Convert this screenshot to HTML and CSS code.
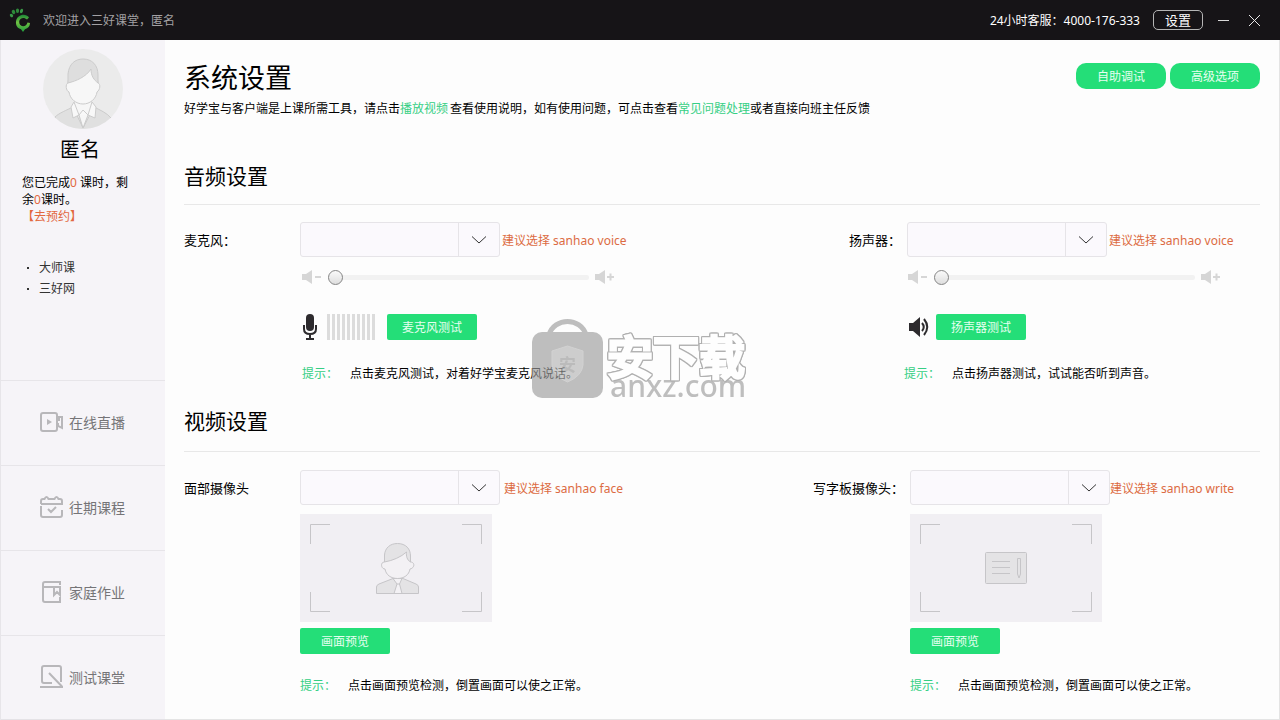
FILE: index.html
```html
<!DOCTYPE html>
<html lang="zh-CN">
<head>
<meta charset="utf-8">
<meta name="viewport" content="width=device-width, initial-scale=1">
<title>三好课堂</title>
<link rel="stylesheet" href="styles.css">
</head>
<body>
<div class="app">
  <header class="topbar">
    <svg class="logo" width="24" height="26" viewBox="0 0 24 26" aria-hidden="true">
      <defs><linearGradient id="leaf" x1="0" y1="0" x2="0" y2="1"><stop offset="0" stop-color="#1f8a38"/><stop offset=".45" stop-color="#6fc043"/><stop offset="1" stop-color="#1f9a3c"/></linearGradient></defs>
      <path d="M20 10.500C17 6 8 7 7 14.500C6.500 19 9 21.500 12 22.200L14 25L16 22.200C19 21.500 21 19 21 16L18.500 15.500C18 18 16 19.300 14 19.200C11.500 19 10 17 10.200 14.500C10.600 11 15 9.500 18 12.500Z" fill="url(#leaf)"/>
      <ellipse cx="2.500" cy="8.500" rx="1.500" ry="1.900" fill="#3a9a48" transform="rotate(-40 2.500 8.500)"/>
      <ellipse cx="4.500" cy="5" rx="1.700" ry="2.200" fill="#2d8a3a" transform="rotate(-25 4.500 5)"/>
      <ellipse cx="8.500" cy="3.800" rx="1.600" ry="2.300" fill="#2f8a3c"/>
      <ellipse cx="12.500" cy="4" rx="1.500" ry="2.300" fill="#3a9a48" transform="rotate(20 12.500 4)"/>
    </svg>
    <span class="welcome">欢迎进入三好课堂，匿名</span>
    <span class="hotline">24小时客服：4000-176-333</span>
    <button class="settings" type="button">设置</button>
    <button class="window-button" type="button" aria-label="最小化"><svg width="11" height="11" viewBox="0 0 11 11"><path d="M0 5.500H11" stroke="#d8d8d8"/></svg></button>
    <button class="window-button" type="button" aria-label="关闭"><svg width="11" height="11" viewBox="0 0 11 11"><path d="M0 0L11 11M11 0L0 11" stroke="#e8e8e8"/></svg></button>
  </header>

  <aside class="sidebar">
    <section class="profile">
      <svg class="avatar" width="80" height="80" viewBox="0 0 80 80" aria-hidden="true">
        <defs><clipPath id="round"><circle cx="40" cy="40" r="40"/></clipPath></defs>
        <circle cx="40" cy="40" r="40" fill="#ebebeb"/>
        <g clip-path="url(#round)" stroke="#cbcbcb" stroke-width="1">
          <path d="M12 68C16 64 24 61 30 58L40 79L51 58C57 61 64 64 68 69V81H12Z" fill="#e0e0e0"/>
          <path d="M31 53L28 58L30 69L36 66L40 79L45 66L52 69L53 58L49 53Z" fill="#f8f8f8"/>
          <path d="M31 53L36 66L40 61L45 66L49 53M36 66L40 79L45 66" fill="#f6f6f6"/>
          <path d="M25 34C22 35 23 42 26 43C27 50 33 55 40 55C47 55 53 50 54 43C57 41 58 35 55 34L53 20H27Z" fill="#f7f7f7"/>
          <path d="M25 34V25C26 15 32 10 40 10C49 10 55 16 55 26V34C51 31 48 27 48 20C43 28 33 32 25 34Z" fill="#dedede"/>
        </g>
      </svg>
      <h2 class="user-name">匿名</h2>
      <p class="lesson-info">您已完成<em>0</em> 课时，剩余<em>0</em>课时。<br><a href="#">【去预约】</a></p>
      <ul class="site-links">
        <li><a href="#">大师课</a></li>
        <li><a href="#">三好网</a></li>
      </ul>
    </section>
    <nav class="menu">
      <a href="#"><svg width="24" height="24" viewBox="0 0 24 24"><rect x="1" y="3" width="16" height="18" rx="2"/><path d="M17 10H19V7H22V18L18 16V13"/><path d="M7 9V15L12 12Z" class="solid"/></svg><span>在线直播</span></a>
      <a href="#"><svg width="24" height="24" viewBox="0 0 24 24"><path d="M1 11V20Q1 22 3 22H20Q22 22 22 20V15M1 9H22V6Q22 4 20 4H18.500Q16.500 0 14.500 4H8.500Q6.500 0 4.500 4H3Q1 4 1 6V9M8 14L11 17L16 12"/></svg><span>往期课程</span></a>
      <a href="#"><svg width="24" height="24" viewBox="0 0 24 24"><path d="M20 2H5Q3 2 3 4V20Q3 22 5 22H20V17M3 7H20V15L17 12L14 15V7M20 1V5"/></svg><span>家庭作业</span></a>
      <a href="#"><svg width="24" height="24" viewBox="0 0 24 24"><path d="M12 18H4Q2 18 2 16V3Q2 1 4 1H19Q21 1 21 3V17M9 8L22 21.500M0 22H23"/></svg><span>测试课堂</span></a>
    </nav>
  </aside>

  <main class="content">
    <div class="page-head">
      <div>
        <h1>系统设置</h1>
        <p class="intro">好学宝与客户端是上课所需工具，请点击<a class="spaced" href="#">播放视频</a>查看使用说明，如有使用问题，可点击查看<a href="#">常见问题处理</a>或者直接向班主任反馈</p>
      </div>
      <div class="actions">
        <button class="pill" type="button">自助调试</button>
        <button class="pill" type="button">高级选项</button>
      </div>
    </div>

    <section class="audio">
      <h2>音频设置</h2>
      <div class="devices">
        <label for="mic">麦克风：</label>
        <div class="device">
          <div class="choice">
            <span class="select-box"><select id="mic"><option></option></select><svg width="14" height="8" viewBox="0 0 14 8"><path d="M0 .5L7 7L14 .5"/></svg></span>
            <span class="advice">建议选择 sanhao voice</span>
          </div>
          <div class="volume">
            <svg width="20" height="16" viewBox="0 0 20 16"><path class="horn" d="M0 5H4L10 1V15L4 11H0Z"/><path d="M13 8H19"/></svg>
            <input type="range" min="0" max="100" value="0" aria-label="麦克风音量">
            <svg width="20" height="16" viewBox="0 0 20 16"><path class="horn" d="M0 5H4L10 1V15L4 11H0Z"/><path d="M12 8H19M15.500 4.500V11.500"/></svg>
          </div>
          <div class="test">
            <svg width="14" height="26" viewBox="0 0 14 26"><rect x="3" y="0" width="8" height="17" rx="4" fill="#2d2b2e"/><path d="M1 11V15Q1 20 7 20Q13 20 13 15V11M7 20V25M3 25H11" fill="none" stroke="#2d2b2e" stroke-width="2"/></svg>
            <div class="meter"></div>
            <button class="green" type="button">麦克风测试</button>
          </div>
          <p class="tip"><b>提示：</b>点击麦克风测试，对着好学宝麦克风说话。</p>
        </div>
        <label for="speaker">扬声器：</label>
        <div class="device side">
          <div class="choice">
            <span class="select-box"><select id="speaker"><option></option></select><svg width="14" height="8" viewBox="0 0 14 8"><path d="M0 .5L7 7L14 .5"/></svg></span>
            <span class="advice">建议选择 sanhao voice</span>
          </div>
          <div class="volume">
            <svg width="20" height="16" viewBox="0 0 20 16"><path class="horn" d="M0 5H4L10 1V15L4 11H0Z"/><path d="M13 8H19"/></svg>
            <input type="range" min="0" max="100" value="0" aria-label="扬声器音量">
            <svg width="20" height="16" viewBox="0 0 20 16"><path class="horn" d="M0 5H4L10 1V15L4 11H0Z"/><path d="M12 8H19M15.500 4.500V11.500"/></svg>
          </div>
          <div class="test">
            <svg width="20" height="20" viewBox="0 0 20 20"><path d="M0 6H4L11 0V20L4 14H0Z" fill="#2d2b2e"/><path d="M13 6Q16.500 10 13 14M15 2Q21.500 10 15 18" fill="none" stroke="#2d2b2e" stroke-width="2"/></svg>
            <button class="green" type="button">扬声器测试</button>
          </div>
          <p class="tip"><b>提示：</b>点击扬声器测试，试试能否听到声音。</p>
        </div>
      </div>
    </section>

    <section class="video">
      <h2>视频设置</h2>
      <div class="devices">
        <label for="face">面部摄像头</label>
        <div class="device">
          <div class="choice">
            <span class="select-box"><select id="face"><option></option></select><svg width="14" height="8" viewBox="0 0 14 8"><path d="M0 .5L7 7L14 .5"/></svg></span>
            <span class="advice">建议选择 sanhao face</span>
          </div>
          <svg class="preview" width="192" height="108" viewBox="0 0 192 108" aria-hidden="true">
            <path d="M10.500 30V10.500H30M162 10.500H181.500V30M10.500 78V97.500H30M162 97.500H181.500V78"/>
            <path d="M76.500 79.500V73Q76.500 71 79 70L93 64.500H103L116 70Q118.500 71 118.500 73V79.500Z" fill="#e4e3e5"/>
            <path d="M93 64.500H102L99.500 70L102 79.500H94L97 70Z" fill="#f3f1f4"/><path d="M97 70H100"/>
            <path d="M84.500 48C80 48 81 55 85 55C86 61 91 64.500 97.500 64.500C104 64.500 109 61 110 55C115 54 115 48 110.500 48L106 35H90Z" fill="#f3f1f4"/>
            <path d="M84.500 48V41C85 34 90 29.500 97.500 29.500C106 29.500 110.500 35 110.500 42V48C107 46 106 42 106.500 38C101 43 93 46.500 84.500 48Z" fill="#e4e3e5"/>
          </svg>
          <button class="green" type="button">画面预览</button>
          <p class="tip"><b>提示：</b>点击画面预览检测，倒置画面可以使之正常。</p>
        </div>
        <label for="board">写字板摄像头：</label>
        <div class="device side">
          <div class="choice">
            <span class="select-box"><select id="board"><option></option></select><svg width="14" height="8" viewBox="0 0 14 8"><path d="M0 .5L7 7L14 .5"/></svg></span>
            <span class="advice">建议选择 sanhao write</span>
          </div>
          <svg class="preview" width="192" height="108" viewBox="0 0 192 108" aria-hidden="true">
            <path d="M10.500 30V10.500H30M162 10.500H181.500V30M10.500 78V97.500H30M162 97.500H181.500V78"/>
            <rect x="75.500" y="38.500" width="41" height="31" rx="1" fill="#e4e3e5"/>
            <path d="M82 47.500H100M82 53.500H100M82 59.500H100M107.500 44.500H110.500V60L109 64L107.500 60Z"/>
          </svg>
          <button class="green" type="button">画面预览</button>
          <p class="tip"><b>提示：</b>点击画面预览检测，倒置画面可以使之正常。</p>
        </div>
      </div>
    </section>

    <div class="watermark">
      <svg width="71" height="80" viewBox="0 0 71 80">
        <path d="M17 17C22-1 49-1 54 17" fill="none" stroke="#9d9d9d" stroke-width="5"/>
        <rect y="14" width="71" height="66" rx="10" fill="#9d9d9d"/>
        <path d="M35.500 28L51 33V47Q50 58 35.500 64Q21 58 20 47V33Z" fill="#b4b4b4" stroke="#bcbcbc"/>
        <text x="35.500" y="53" text-anchor="middle">安</text>
      </svg>
      <div class="watermark-text"><span class="watermark-name">安下载</span><span class="watermark-site">anxz.com</span></div>
    </div>
  </main>
</div>
</body>
</html>
```
FILE: styles.css
```css
* { box-sizing: border-box; }
body, h1, h2, p, ul { margin: 0; padding: 0; }
body, button, select {
  font-family: "Noto Sans", "Noto Sans CJK SC", sans-serif;
  font-size: 12px;
}
body { color: #000; background: #fdfdfd; }
h1, h2 { font-weight: 400; }
a { text-decoration: none; }
button { border: 0; padding: 0; cursor: pointer; }
svg { display: block; flex: none; }

.app {
  display: grid;
  grid-template-columns: 165px minmax(0, 1fr);
  grid-template-rows: 40px 1fr;
  min-height: 100vh;
}

.topbar {
  grid-column: 1 / -1;
  display: flex;
  align-items: center;
  padding: 0 20px 0 9px;
  background: #161417;
  color: #fff;
}
.welcome { margin-left: 10px; margin-right: auto; color: #a3a1a4; }
.settings {
  width: 50px;
  height: 20px;
  margin-left: 13px;
  border: 1px solid #b5b5b5;
  border-radius: 5px;
  background: transparent;
  color: #fff;
  font-size: 13px;
  line-height: 18px;
}
.window-button { margin-left: 15px; background: transparent; }
.window-button + .window-button { margin-left: 20px; }

.sidebar {
  display: flex;
  flex-direction: column;
  border-left: 1px solid #e7e5e9;
  background: #f6f4f8;
  box-shadow: inset 0 -1px #e4e2e6;
}
.profile { flex: 1; padding-top: 9px; }
.avatar { margin: 0 auto; }
.user-name {
  margin-top: 5px;
  padding-right: 6px;
  font-size: 20px;
  line-height: 32px;
  text-align: center;
}
.lesson-info {
  width: 132px;
  margin-top: 8px;
  padding-left: 21px;
  line-height: 17px;
}
.lesson-info em, .lesson-info a { color: #e2683f; font-style: normal; }
.site-links {
  margin-top: 32px;
  padding-left: 26px;
  list-style: none;
  line-height: 21px;
}
.site-links li { display: flex; align-items: center; gap: 10px; }
.site-links li::before { content: ""; width: 2px; height: 2px; background: #333; }
.site-links a { color: #333; }
.menu a {
  display: flex;
  align-items: center;
  gap: 5px;
  height: 85px;
  padding-left: 39px;
  border-top: 1px solid #e7e5e9;
  color: #757477;
  font-size: 14px;
}
.menu span { padding-bottom: 3px; }
.menu svg { margin-bottom: 2px; fill: none; stroke: #b8b7ba; stroke-width: 2; }
.menu .solid { fill: #b8b7ba; stroke: none; }

.content {
  position: relative;
  padding: 20px 19px;
  border-right: 1px solid #e4e4e4;
  border-bottom: 1px solid #e4e4e4;
}
.page-head { display: flex; justify-content: space-between; }
h1 { font-size: 27px; line-height: 36px; }
.intro { margin-top: 3px; line-height: 20px; }
.intro a { color: #35cf84; }
.intro .spaced { margin-right: 2px; }
.actions { display: flex; flex: none; gap: 4px; padding-top: 3px; }
.pill, .green {
  width: 90px;
  height: 26px;
  padding-top: 1px;
  background: #24de78;
  color: #e6fff0;
  line-height: 25px;
}
.pill { border-radius: 10px; }
.green { display: block; border-radius: 2px; }

.content h2 { border-bottom: 1px solid #e8e8e8; font-size: 21px; line-height: 32px; }
.audio h2 { margin-top: 41px; padding-bottom: 12px; }
.video h2 { margin-top: 21px; padding-bottom: 14px; }
.devices {
  display: grid;
  grid-template-columns: 116px minmax(0, 1fr) auto 353px;
  padding-top: 17px;
}
.video .devices { grid-template-columns: 116px minmax(0, 1fr) auto 350px; padding-top: 18px; }
.devices label { padding-right: 6px; font-size: 13px; line-height: 37px; }
.choice { display: flex; align-items: center; gap: 2px; }
.video .choice { gap: 4px; }
.video .side .choice { gap: 0; }
.select-box { position: relative; width: 200px; height: 35px; }
.select-box select {
  appearance: none;
  width: 100%;
  height: 100%;
  border: 1px solid #e6e4e8;
  border-radius: 3px;
  background: linear-gradient(#e6e4e8, #e6e4e8) 157px 0 / 1px 100% no-repeat #fbf9fd;
}
.select-box svg {
  position: absolute;
  top: 14px;
  right: 14px;
  fill: none;
  stroke: #333;
  pointer-events: none;
}
.advice { color: #dc6b42; white-space: nowrap; }

.volume { display: flex; align-items: center; gap: 6px; height: 20px; margin-top: 10px; padding-left: 2px; }
.side .volume { padding-left: 1px; }
.volume svg { stroke: #d6d6d6; stroke-width: 2; }
.volume .horn { fill: #d6d6d6; stroke: none; }
.volume input {
  appearance: none;
  width: 261px;
  height: 15px;
  margin: 0;
  background: transparent;
}
.volume input::-webkit-slider-runnable-track { height: 5px; border-radius: 2px; background: #f2f2f2; }
.volume input::-webkit-slider-thumb {
  appearance: none;
  width: 15px;
  height: 15px;
  margin-top: -5px;
  border: 1px solid #858585;
  border-radius: 50%;
  background: linear-gradient(#fafafa, #dedede);
}
.test { display: flex; align-items: center; height: 26px; margin-top: 27px; padding-left: 3px; }
.side .test { gap: 7px; padding-left: 2px; }
.meter {
  width: 48px;
  height: 26px;
  margin: 0 12px 0 10px;
  background: repeating-linear-gradient(90deg, #dcdcdc 0 3px, transparent 3px 5px);
}
.tip { margin-top: 23px; padding-left: 2px; line-height: 21px; }
.tip b { margin-right: 12px; color: #35cf84; font-weight: 400; }
.audio .side .tip { margin-left: -3px; padding-left: 0; }
.preview { margin: 9px 0 6px; background: #f1eff3; fill: none; stroke: #c6c5c8; }
.video .tip { margin-top: 21px; padding-left: 0; }

.watermark {
  position: absolute;
  top: 278px;
  left: 367px;
  display: flex;
  gap: 4px;
  opacity: .65;
  pointer-events: none;
}
.watermark text { fill: #999; font: 700 17px "Noto Sans CJK SC", sans-serif; }
.watermark-text { display: flex; flex-direction: column; padding-top: 13px; color: #9d9d9d; }
.watermark-name {
  color: #fff;
  font: 500 46px/46px "Noto Sans CJK SC", sans-serif;
  -webkit-text-stroke: 3px #fff;
  filter: drop-shadow(1px 0 #888) drop-shadow(-1px 0 #888) drop-shadow(0 1px #888) drop-shadow(0 -1px #888);
}
.watermark-site { padding-left: 3px; font-size: 30px; font-weight: 500; line-height: 18px; }
```
